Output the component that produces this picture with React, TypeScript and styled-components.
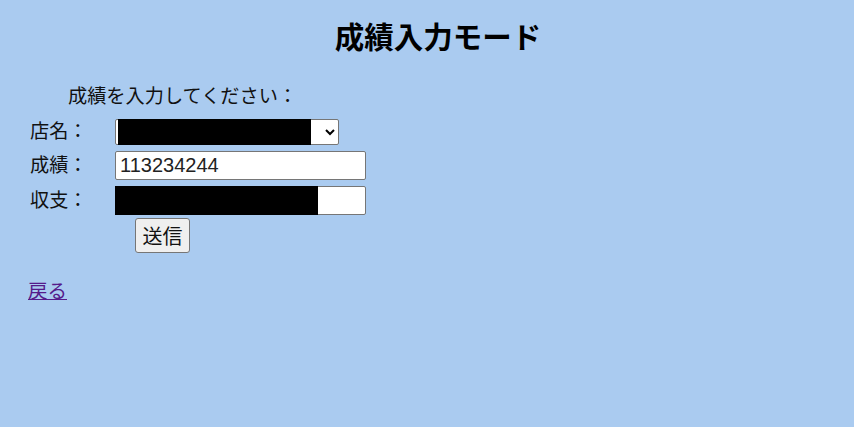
import styled, { createGlobalStyle } from "styled-components";

const GlobalStyle = createGlobalStyle`
  html, body {
    margin: 0;
    background: #aacbf0;
  }
  body {
    font-family: "Liberation Sans", "Noto Sans CJK JP", sans-serif;
    color: #111;
  }
`;

const Page = styled.div`
  display: flex;
  flex-direction: column;
  padding: 0 28px;
  height: 427px;
  box-sizing: border-box;
`;

const Title = styled.h1`
  margin: 20px 0 0;
  text-align: center;
  font-size: 29.5px;
  font-weight: bold;
  line-height: 36px;
  padding-left: 22px;
  color: #000;
`;

const Prompt = styled.p`
  margin: 28px 0 0 40px;
  font-size: 19.2px;
  line-height: 26px;
`;

const FormGrid = styled.div`
  display: grid;
  grid-template-columns: 87px auto;
  row-gap: 6px;
  margin-top: 9px;
  align-items: center;
`;

const Label = styled.label`
  font-size: 19.2px;
  line-height: 26px;
  padding-left: 2px;
`;

const Field = styled.div<{ $width: number }>`
  position: relative;
  width: ${(p) => p.$width}px;
  display: flex;
`;

const Select = styled.select`
  width: 224px;
  height: 26px;
  box-sizing: border-box;
  border: 1px solid #767676;
  border-radius: 2px;
  background: #fff;
  font-size: 16px;
  font-family: inherit;
`;

const Input = styled.input`
  width: 251px;
  height: 29px;
  box-sizing: border-box;
  border: 1px solid #767676;
  border-radius: 2px;
  padding: 1px 4px;
  font-size: 20px;
  font-family: inherit;
  color: #222;
  background: #fff;
`;

const Redaction = styled.span<{ $left: number; $width: number }>`
  position: absolute;
  top: 0;
  bottom: 0;
  left: ${(p) => p.$left}px;
  width: ${(p) => p.$width}px;
  background: #000;
`;

const SubmitRow = styled.div`
  grid-column: 2;
  padding-left: 20px;
  margin-top: -3px;
`;

const Button = styled.button`
  height: 35px;
  width: 55px;
  box-sizing: border-box;
  border: 1px solid #767676;
  border-radius: 3px;
  background: #efefef;
  font-size: 20px;
  font-family: inherit;
  color: #111;
  padding: 0;
`;

const BackLink = styled.a`
  margin-top: 25px;
  font-size: 19.5px;
  line-height: 26px;
  color: #551a8b;
  text-decoration: underline;
  align-self: flex-start;
`;

const App = () => {
  return (
    <>
      <GlobalStyle />
      <Page>
        <Title>成績入力モード</Title>
        <Prompt>成績を入力してください：</Prompt>
        <FormGrid>
          <Label>店名：</Label>
          <Field $width={224}>
            <Select>
              <option>店舗</option>
            </Select>
            <Redaction $left={3} $width={193} />
          </Field>
          <Label>成績：</Label>
          <Field $width={251}>
            <Input defaultValue="113234244" />
          </Field>
          <Label>収支：</Label>
          <Field $width={251}>
            <Input defaultValue="0" />
            <Redaction $left={0} $width={203} />
          </Field>
          <SubmitRow>
            <Button>送信</Button>
          </SubmitRow>
        </FormGrid>
        <BackLink href="#">戻る</BackLink>
      </Page>
    </>
  );
};

export default App;
